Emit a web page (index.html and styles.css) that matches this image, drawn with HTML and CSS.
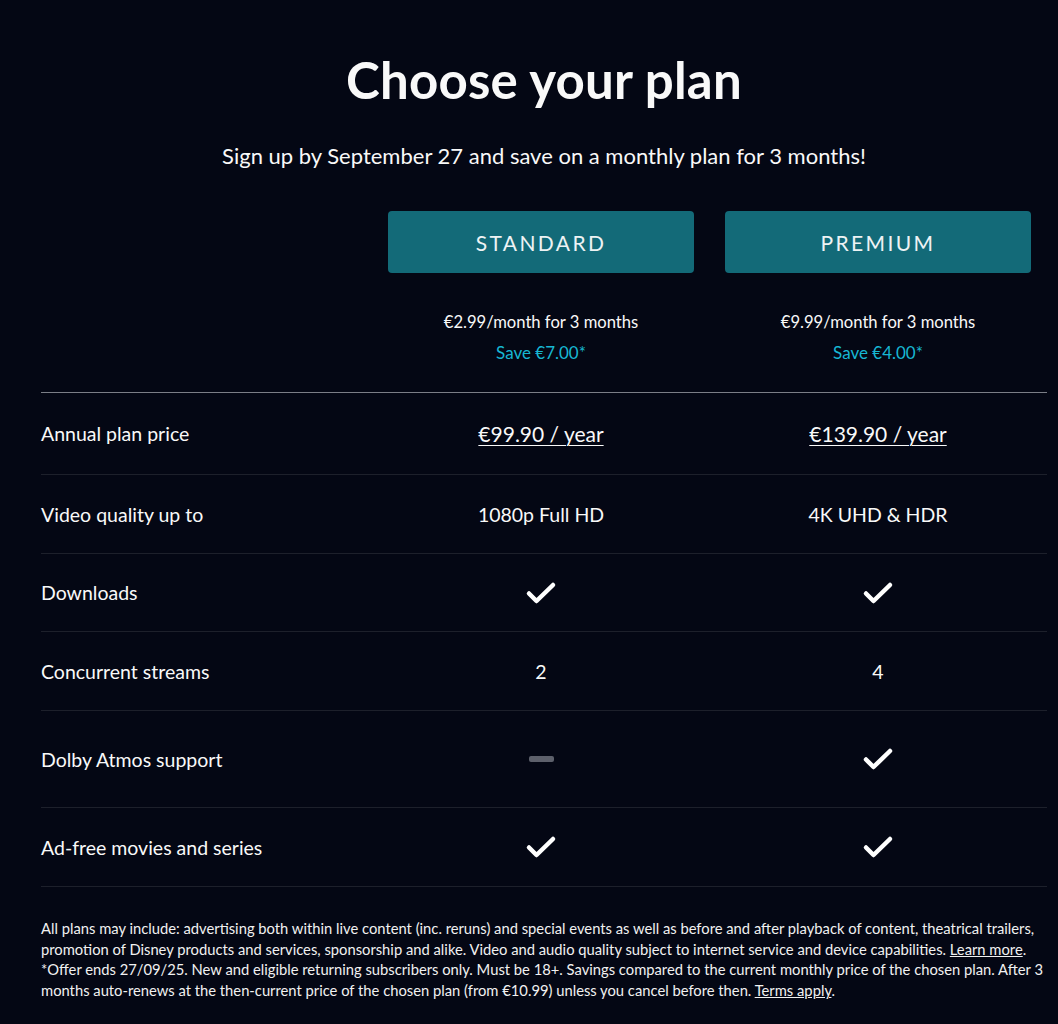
FILE: index.html
```html
<!DOCTYPE html>
<html lang="en">
<head>
<meta charset="utf-8">
<title>Choose your plan</title>
<link rel="stylesheet" href="styles.css">
</head>
<body>
<main class="page">
  <h1 class="title">Choose your plan</h1>
  <p class="subtitle">Sign up by September 27 and save on a monthly plan for 3 months!</p>

  <section class="plans">
    <div class="head-row">
      <div class="cell-label"></div>
      <div class="plan-head">
        <div class="plan-btn">STANDARD</div>
        <div class="offer">€2.99/month for 3 months</div>
        <div class="save">Save €7.00*</div>
      </div>
      <div class="plan-head">
        <div class="plan-btn">PREMIUM</div>
        <div class="offer">€9.99/month for 3 months</div>
        <div class="save">Save €4.00*</div>
      </div>
    </div>

    <div class="row row-first">
      <div class="cell-label">Annual plan price</div>
      <div class="cell"><a class="price-link" href="#">€99.90 / year</a></div>
      <div class="cell"><a class="price-link" href="#">€139.90 / year</a></div>
    </div>
    <div class="row">
      <div class="cell-label">Video quality up to</div>
      <div class="cell">1080p Full HD</div>
      <div class="cell">4K UHD &amp; HDR</div>
    </div>
    <div class="row row-short">
      <div class="cell-label">Downloads</div>
      <div class="cell"><svg class="check" viewBox="0 0 32 24"><path d="M4 12.5 L11.5 20 L28 4"/></svg></div>
      <div class="cell"><svg class="check" viewBox="0 0 32 24"><path d="M4 12.5 L11.5 20 L28 4"/></svg></div>
    </div>
    <div class="row">
      <div class="cell-label">Concurrent streams</div>
      <div class="cell">2</div>
      <div class="cell">4</div>
    </div>
    <div class="row row-tall">
      <div class="cell-label">Dolby Atmos support</div>
      <div class="cell"><span class="dash"></span></div>
      <div class="cell"><svg class="check" viewBox="0 0 32 24"><path d="M4 12.5 L11.5 20 L28 4"/></svg></div>
    </div>
    <div class="row">
      <div class="cell-label">Ad-free movies and series</div>
      <div class="cell"><svg class="check" viewBox="0 0 32 24"><path d="M4 12.5 L11.5 20 L28 4"/></svg></div>
      <div class="cell"><svg class="check" viewBox="0 0 32 24"><path d="M4 12.5 L11.5 20 L28 4"/></svg></div>
    </div>
  </section>

  <p class="legal">All plans may include: advertising both within live content (inc. reruns) and special events as well as before and after playback of content, theatrical trailers, promotion of Disney products and services, sponsorship and alike. Video and audio quality subject to internet service and device capabilities. <a href="#">Learn more</a>.<br>*Offer ends 27/09/25. New and eligible returning subscribers only. Must be 18+. Savings compared to the current monthly price of the chosen plan. After 3 months auto-renews at the then-current price of the chosen plan (from €10.99) unless you cancel before then. <a href="#">Terms apply</a>.</p>
</main>
</body>
</html>
```

FILE: styles.css
```css
html, body {
  margin: 0;
  padding: 0;
  background: #040714;
}

body {
  color: #f9f9f9;
  font-family: "Lato", "Noto Sans", sans-serif;
}

.page {
  width: 1006px;
  margin-left: 41px;
  padding-top: 50px;
}

.title {
  margin: 0;
  text-align: center;
  font-size: 51px;
  font-weight: 700;
  line-height: 60px;
  letter-spacing: 0.2px;
}

.subtitle {
  margin: 31px 0 0;
  text-align: center;
  font-size: 22px;
  line-height: 30px;
}

.plans {
  margin-top: 40px;
}

.head-row,
.row {
  display: grid;
  grid-template-columns: 316px 306px 306px;
  column-gap: 31px;
  padding-right: 16px;
}

.head-row {
  border-bottom: 1px solid #7b7e87;
  padding-bottom: 28px;
}

.plan-head {
  display: flex;
  flex-direction: column;
  align-items: center;
}

.plan-btn {
  align-self: stretch;
  height: 62px;
  display: flex;
  align-items: center;
  justify-content: center;
  background: #136a78;
  border-radius: 4px;
  font-size: 21px;
  letter-spacing: 2.4px;
  color: #eef3f4;
}

.offer {
  margin-top: 38px;
  font-size: 16.6px;
  line-height: 22px;
}

.save {
  margin-top: 9px;
  font-size: 17px;
  line-height: 22px;
  color: #17b7d3;
}

.row {
  align-items: center;
  height: 78px;
  border-bottom: 1px solid #1d202b;
  font-size: 19.5px;
}

.row-first {
  height: 81px;
}

.row-short {
  height: 77px;
}

.row-tall {
  height: 96px;
}

.cell-label {
  text-align: left;
}

.cell {
  display: flex;
  justify-content: center;
  align-items: center;
}

.price-link {
  color: #f9f9f9;
  font-size: 21px;
  text-decoration: underline;
  text-underline-offset: 3px;
  text-decoration-thickness: 1px;
}

.check {
  width: 32px;
  height: 24px;
  fill: none;
  stroke: #ffffff;
  stroke-width: 4.5;
  stroke-linecap: round;
  stroke-linejoin: round;
}

.dash {
  display: block;
  width: 25px;
  height: 6px;
  border-radius: 2px;
  background: #5d606b;
}

.legal {
  margin: 31px 0 0;
  font-size: 14.75px;
  line-height: 20.7px;
  color: #f1f1f1;
}

.legal a {
  color: #f1f1f1;
  text-decoration: underline;
}
```
